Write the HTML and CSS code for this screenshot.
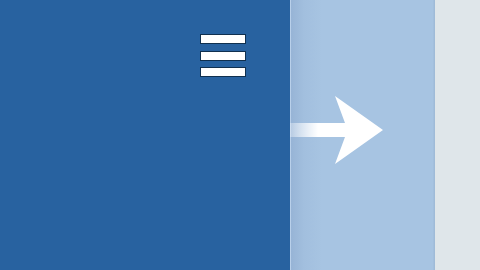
FILE: index.html
```html
<!DOCTYPE html>
<html>
<head>
<meta charset="utf-8">
<link rel="stylesheet" href="styles.css">
</head>
<body>
<div class="screen">
  <div class="nav">
    <div class="burger">
      <span class="bar"></span>
      <span class="bar"></span>
      <span class="bar"></span>
    </div>
  </div>
  <div class="drawer">
    <svg class="arrow" width="95" height="70" viewBox="0 0 95 70">
      <defs>
        <linearGradient id="shaft" x1="0" y1="0" x2="1" y2="0">
          <stop offset="0" stop-color="#ffffff" stop-opacity="0.3"/>
          <stop offset="0.5" stop-color="#ffffff" stop-opacity="1"/>
          <stop offset="1" stop-color="#ffffff" stop-opacity="1"/>
        </linearGradient>
      </defs>
      <rect x="0" y="28" width="56" height="14" fill="url(#shaft)"/>
      <polygon points="45,1 93,35 45,69 55,42 55,28" fill="#ffffff"/>
    </svg>
  </div>
  <div class="side"></div>
</div>
</body>
</html>
```
FILE: styles.css
```css
html, body {
  margin: 0;
  padding: 0;
}
body {
  width: 480px;
  height: 270px;
  overflow: hidden;
  font-family: "Liberation Sans", sans-serif;
}
.screen {
  display: flex;
  width: 480px;
  height: 270px;
}
.nav {
  width: 290px;
  flex: none;
  background: #2862a0;
  box-sizing: border-box;
  padding: 34px 0 0 200px;
}
.burger {
  display: flex;
  flex-direction: column;
  gap: 6.5px;
  width: 46px;
}
.bar {
  display: block;
  height: 10px;
  box-sizing: border-box;
  background: #ffffff;
  border: 1px solid #10304f;
}
.drawer {
  width: 145px;
  flex: none;
  box-sizing: border-box;
  padding-top: 95px;
  background: linear-gradient(to right, #b9d0ea 0, #b9d0ea 1px, #97b4d6 1px, #a2bfde 14px, #a7c4e2 32px, #a7c4e2 calc(100% - 2px), #9fbbd8 calc(100% - 1px), #9fbbd8 100%);
}
.arrow {
  display: block;
}
.side {
  flex: 1;
  background: #dfe6ea;
}
```
